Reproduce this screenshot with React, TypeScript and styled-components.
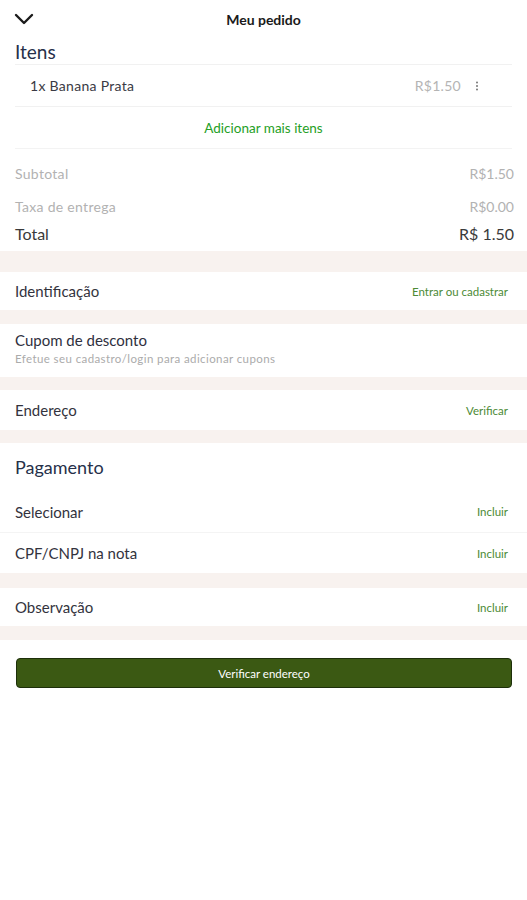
import styled, { createGlobalStyle } from "styled-components";

const GlobalStyle = createGlobalStyle`
  body {
    margin: 0;
    background: #ffffff;
    font-family: Lato, "Open Sans", sans-serif;
  }
  * {
    box-sizing: border-box;
  }
`;

const Page = styled.div`
  width: 527px;
  display: flex;
  flex-direction: column;
`;

const Header = styled.div`
  position: relative;
  height: 38px;
  display: flex;
  align-items: center;
  justify-content: center;
  padding: 0 15px;
  > svg {
    position: absolute;
    left: 14px;
    top: 13px;
  }
  > p {
    margin: 0;
    font-size: 14px;
    font-weight: 700;
    color: #1a1a1a;
  }
`;

const Section = styled.div`
  padding: 0 15px;
  display: flex;
  flex-direction: column;
`;

const Heading = styled.p<{ size: number; height: number }>`
  margin: 0;
  height: ${({ height }) => height}px;
  display: flex;
  align-items: center;
  font-size: ${({ size }) => size}px;
  color: #26304a;
`;

const ItemRow = styled.div`
  height: 42px;
  display: flex;
  align-items: center;
  padding: 0 33px 0 15px;
  border-top: 1px solid #f1f1f1;
  > p {
    margin: 0;
    font-size: 14px;
    letter-spacing: 0.3px;
    color: #3a3a44;
    flex: 1;
  }
  > span {
    font-size: 14px;
    letter-spacing: 0.3px;
    color: #b4b4b4;
    margin-right: 14px;
  }
`;

const AddRow = styled.div`
  height: 43px;
  display: flex;
  align-items: center;
  justify-content: center;
  border-top: 1px solid #f1f1f1;
  border-bottom: 1px solid #f3f3f3;
  font-size: 13.5px;
  color: #25a025;
`;

const Summary = styled.div`
  padding: 8px 13px 8px 15px;
  display: flex;
  flex-direction: column;
`;

const SummaryRow = styled.div<{ strong?: boolean }>`
  height: ${({ strong }) => (strong ? "20px" : "33px")};
  display: flex;
  align-items: center;
  justify-content: space-between;
  color: ${({ strong }) => (strong ? "#3a3a3a" : "#b2b2b2")};
  > span:first-child {
    font-size: ${({ strong }) => (strong ? "16px" : "14px")};
    letter-spacing: ${({ strong }) => (strong ? "0" : "0.3px")};
  }
  > span:last-child {
    font-size: ${({ strong }) => (strong ? "16px" : "14px")};
  }
`;

const Band = styled.div<{ height: number }>`
  height: ${({ height }) => height}px;
  background: #f8f2ef;
`;

const Row = styled.div<{ height: number; divider?: boolean }>`
  height: ${({ height }) => height}px;
  display: flex;
  align-items: center;
  justify-content: space-between;
  padding: 0 19px 0 15px;
  border-top: ${({ divider }) => (divider ? "1px solid #f4f4f4" : "none")};
  > p {
    margin: 0;
    font-size: 15px;
    color: #33333d;
  }
`;

const Action = styled.span`
  font-size: 11.5px;
  color: #4c8a35;
`;

const CouponBlock = styled.div`
  height: 53px;
  padding: 7px 15px 0;
  display: flex;
  flex-direction: column;
  > p {
    margin: 0;
    font-size: 15px;
    color: #2f3040;
    line-height: 19px;
  }
  > span {
    margin-top: 2px;
    font-size: 11.5px;
    letter-spacing: 0.4px;
    color: #ababab;
  }
`;

const Footer = styled.div`
  padding: 18px 15px 0 16px;
`;

const PrimaryButton = styled.button`
  width: 496px;
  height: 30px;
  border: 1px solid #1d2f0a;
  border-radius: 4px;
  background: #3b5913;
  color: #ffffff;
  font-family: Lato, sans-serif;
  font-size: 11.5px;
  cursor: pointer;
`;

const Chevron = () => (
  <svg width="20" height="12" viewBox="0 0 20 12">
    <path
      d="M2 2 L10 10 L18 2"
      fill="none"
      stroke="#1b1b1b"
      strokeWidth="2.4"
      strokeLinecap="round"
      strokeLinejoin="round"
    />
  </svg>
);

const Kebab = () => (
  <svg width="4" height="10" viewBox="0 0 4 10">
    <circle cx="2" cy="1.5" r="1" fill="#777" />
    <circle cx="2" cy="5" r="1" fill="#777" />
    <circle cx="2" cy="8.5" r="1" fill="#777" />
  </svg>
);

const App = () => {
  return (
    <Page>
      <GlobalStyle />
      <Header>
        <Chevron />
        <p>Meu pedido</p>
      </Header>
      <Section>
        <Heading size={19} height={26}>
          Itens
        </Heading>
        <ItemRow>
          <p>1x Banana Prata</p>
          <span>R$1.50</span>
          <Kebab />
        </ItemRow>
        <AddRow>Adicionar mais itens</AddRow>
      </Section>
      <Summary>
        <SummaryRow>
          <span>Subtotal</span>
          <span>R$1.50</span>
        </SummaryRow>
        <SummaryRow>
          <span>Taxa de entrega</span>
          <span>R$0.00</span>
        </SummaryRow>
        <SummaryRow strong>
          <span>Total</span>
          <span>R$ 1.50</span>
        </SummaryRow>
      </Summary>
      <Band height={21} />
      <Row height={38}>
        <p>Identificação</p>
        <Action>Entrar ou cadastrar</Action>
      </Row>
      <Band height={14} />
      <CouponBlock>
        <p>Cupom de desconto</p>
        <span>Efetue seu cadastro/login para adicionar cupons</span>
      </CouponBlock>
      <Band height={13} />
      <Row height={40}>
        <p>Endereço</p>
        <Action>Verificar</Action>
      </Row>
      <Band height={13} />
      <Section>
        <Heading size={18} height={48}>
          Pagamento
        </Heading>
      </Section>
      <Row height={41}>
        <p>Selecionar</p>
        <Action>Incluir</Action>
      </Row>
      <Row height={41} divider>
        <p>CPF/CNPJ na nota</p>
        <Action>Incluir</Action>
      </Row>
      <Band height={15} />
      <Row height={38}>
        <p>Observação</p>
        <Action>Incluir</Action>
      </Row>
      <Band height={14} />
      <Footer>
        <PrimaryButton>Verificar endereço</PrimaryButton>
      </Footer>
    </Page>
  );
};

export default App;
